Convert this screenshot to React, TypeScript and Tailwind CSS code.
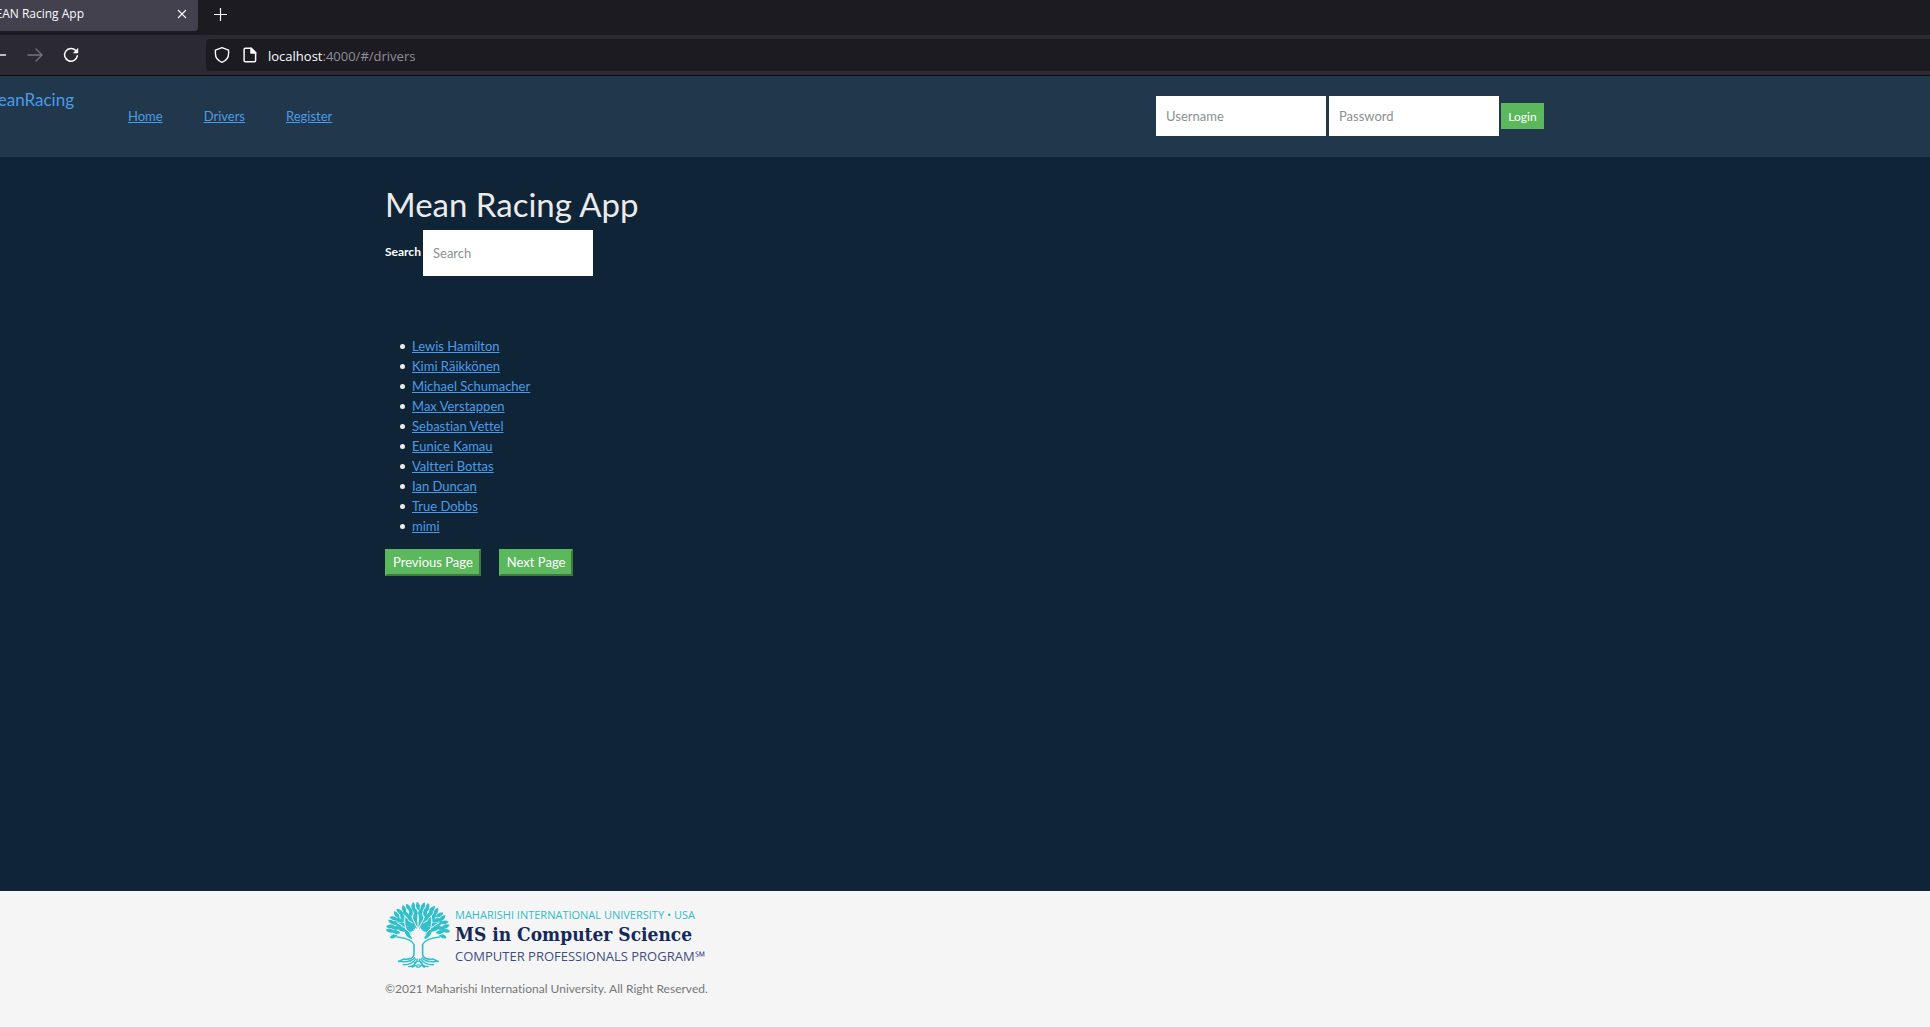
import React from "react";

const drivers = [
  "Lewis Hamilton",
  "Kimi Räikkönen",
  "Michael Schumacher",
  "Max Verstappen",
  "Sebastian Vettel",
  "Eunice Kamau",
  "Valtteri Bottas",
  "Ian Duncan",
  "True Dobbs",
  "mimi",
];

const navLinks = ["Home", "Drivers", "Register"];

type Leaf = { x: number; y: number; r: number; s: number };

function ring(rx: number, ry: number, from: number, to: number, count: number, s: number, sway: number): Leaf[] {
  return Array.from({ length: count }, (_, i) => {
    const a = from + ((to - from) * i) / (count - 1);
    const rad = (a * Math.PI) / 180;
    const tilt = i % 2 === 0 ? sway : -sway;
    return { x: 115 + rx * Math.cos(rad), y: 108 + ry * Math.sin(rad), r: a + 90 + tilt, s };
  });
}

const leaves: Leaf[] = [
  ...ring(84, 74, 180, 360, 19, 1.1, 12),
  ...ring(67, 57, 176, 364, 16, 1.15, 16),
  ...ring(49, 42, 186, 354, 10, 1.3, 14),
  ...ring(30, 24, 190, 350, 6, 1.5, 0),
  { x: 86, y: 118, r: -35, s: 1.5 },
  { x: 145, y: 118, r: 35, s: 1.5 },
  { x: 42, y: 124, r: -115, s: 1.1 },
  { x: 189, y: 124, r: 115, s: 1.1 },
];

function TreeLogo() {
  return (
    <svg viewBox="15 18 200 206" className="h-[68px] w-[66px] shrink-0" aria-hidden="true">
      {leaves.map((l, i) => (
        <path
          key={i}
          d="M0 -13 C7 -6 7 5 0 12 C-7 5 -7 -6 0 -13Z"
          fill="#30c0cb"
          transform={`translate(${l.x} ${l.y}) rotate(${l.r}) scale(${l.s})`}
        />
      ))}
      <g fill="none" stroke="#f5f5f5" strokeWidth="3" strokeLinecap="round">
        <path d="M115 145V58M115 105L96 66M115 105L135 66M103 140C97 112 70 94 52 84M127 140C133 112 161 94 179 84M100 142C85 128 66 122 42 118M130 142C146 128 165 122 189 118M79 105C74 88 73 76 76 62M152 105C157 88 158 76 155 62" />
      </g>
      <path d="M104 150C101 132 98 126 90 120L107 130L110 112L115 104L121 112L124 130L140 120C132 126 129 132 127 150Z" fill="#f5f5f5" stroke="#f5f5f5" strokeWidth="2" />
      <g fill="none" stroke="#30c0cb" strokeWidth="5" strokeLinecap="round">
        <path d="M52 127C77 130 98 137 103 150V181C100 192 88 196 72 194L56 201" />
        <path d="M180 127C155 130 134 137 129 150V181C132 192 144 196 160 194L176 201" />
      </g>
      <g fill="none" stroke="#30c0cb" strokeWidth="4" strokeLinecap="round">
        <path d="M56 201C80 204 96 201 105 190M176 201C152 204 136 201 127 190M70 211C88 212 99 207 108 194M162 211C144 212 133 207 124 194M86 217C102 216 110 207 113 194M146 217C130 216 122 207 119 194M98 219C108 209 124 209 134 219M104 206C111 198 121 198 128 206M108 214C113 221 119 221 124 214" />
      </g>
    </svg>
  );
}

const field =
  "w-[170px] bg-white px-[10px] text-[13px] text-[#555] outline-none placeholder:text-[#8b8f93]";

const pageButton =
  "h-[27px] border-2 border-t-[#5cb85c] border-r-[#3d7b3d] border-b-[#3d7b3d] border-l-[#5cb85c] bg-[#5cb85c] px-[6px] pb-[2px]";

export default function App() {
  return (
    <div className="flex min-h-screen flex-col bg-[#0f2537] font-['Lato',sans-serif] text-[13px] leading-5 text-[#ebebeb] [font-variant-ligatures:none]">
      <header className="font-['Open_Sans',sans-serif]">
        <div className="flex h-[35px] items-start bg-[#1c1b22]">
          <div className="flex h-[31px] w-[198px] items-center rounded-br bg-[#42414d] pr-[10px] text-[#fbfbfe]">
            <div className="flex w-[84px] justify-end pb-[3px] text-xs leading-5 whitespace-nowrap">
              <span>EAN Racing App</span>
            </div>
            <button aria-label="Close tab" className="ml-auto pb-1">
              <svg viewBox="0 0 12 12" className="size-3" fill="none" stroke="currentColor" strokeWidth="1.1">
                <path d="M2 2L10 10M10 2L2 10" />
              </svg>
            </button>
          </div>
          <button aria-label="New tab" className="ml-4 pt-2 text-[#fbfbfe]">
            <svg viewBox="0 0 13 13" className="size-[13px]" fill="none" stroke="currentColor" strokeWidth="1.2">
              <path d="M6.5 0V13M0 6.5H13" />
            </svg>
          </button>
        </div>
        <div className="flex h-[41px] items-center border-b border-[#0a0a12] bg-[#2b2a33] text-[#fbfbfe]">
          <button aria-label="Back" className="w-[6px] overflow-hidden">
            <svg viewBox="0 0 6 16" className="h-4 w-[6px]" fill="none" stroke="currentColor" strokeWidth="1.4">
              <path d="M0 8H6" />
            </svg>
          </button>
          <button aria-label="Forward" className="ml-[21px] text-[#76757d]">
            <svg viewBox="0 0 16 16" className="size-4" fill="none" stroke="currentColor" strokeWidth="1.3" strokeLinecap="round" strokeLinejoin="round">
              <path d="M1 8H15M9 2L15 8L9 14" />
            </svg>
          </button>
          <button aria-label="Reload" className="ml-5">
            <svg viewBox="0 0 16 16" className="size-4" fill="none" stroke="currentColor" strokeWidth="1.5" strokeLinecap="round">
              <path d="M12.8 3.6A6.4 6.4 0 1 0 14.3 8.8" />
              <path d="M15.2 .8V6.2H9.8Z" fill="currentColor" stroke="none" />
            </svg>
          </button>
          <div className="ml-[127px] flex h-8 flex-1 items-center rounded-l bg-[#1c1b22] pl-2">
            <svg viewBox="0 0 16 16" className="size-4" fill="none" stroke="currentColor" strokeWidth="1.4" strokeLinejoin="round" aria-hidden="true">
              <path d="M8 .7L14.6 3.1V6.2C14.6 10.5 12.2 13.8 8 15.3C3.8 13.8 1.4 10.5 1.4 6.2V3.1Z" />
            </svg>
            <svg viewBox="0 0 16 16" className="ml-3 size-4" fill="none" stroke="currentColor" strokeWidth="1.5" strokeLinejoin="round" aria-hidden="true">
              <path d="M3.2 1.3H9.2L13.6 5.7V13.4Q13.6 14.7 12.3 14.7H3.4Q2.1 14.7 2.1 13.4V2.4Q2.1 1.3 3.2 1.3Z" />
              <path d="M9 1.2V5.9H13.7Z" fill="currentColor" />
            </svg>
            <p className="ml-[10px] pt-[2px]">
              localhost<span className="text-[#8f8f98]">:4000/#/drivers</span>
            </p>
          </div>
        </div>
      </header>

      <nav className="flex h-[81px] items-start bg-[#20374c] pr-[20%]">
        <a href="#/" className="flex w-[74px] justify-end pt-[14px] text-[17px] leading-5 text-[#4c9be8]">
          eanRacing
        </a>
        <div className="ml-[54px] flex gap-[41px] pt-[30px]">
          {navLinks.map((name) => (
            <a key={name} href={"#/" + name.toLowerCase()} className="text-[#4c9be8] underline">
              {name}
            </a>
          ))}
        </div>
        <form className="ml-auto flex items-center pt-5">
          <input aria-label="Username" placeholder="Username" className={field + " h-10"} />
          <input aria-label="Password" type="password" placeholder="Password" className={field + " ml-[3px] h-10"} />
          <button type="button" className="ml-[2px] h-[26px] w-[43px] bg-[#5cb85c] pt-px text-xs text-white">
            Login
          </button>
        </form>
      </nav>

      <main className="mx-auto w-full max-w-[1160px] flex-1 pt-[27px]">
        <h1 className="text-[33px] leading-10">Mean Racing App</h1>
        <div className="mt-[6px] flex items-center">
          <label htmlFor="search" className="w-[38px] pb-[2px] text-xs font-bold text-white">
            Search
          </label>
          <input id="search" placeholder="Search" className={field + " h-[46px]"} />
        </div>
        <ul className="mt-[60px] pl-[15px]">
          {drivers.map((name) => (
            <li
              key={name}
              className="flex items-center gap-[7px] before:size-[5px] before:rounded-full before:bg-[#ebebeb]"
            >
              <a href="#/drivers" className="text-[#4c9be8] underline">
                {name}
              </a>
            </li>
          ))}
        </ul>
        <div className="mt-[13px] flex gap-[18px] text-white">
          <button className={pageButton}>Previous Page</button>
          <button className={pageButton}>Next Page</button>
        </div>
      </main>

      <footer className="h-[136px] bg-[#f5f5f5]">
        <div className="mx-auto max-w-[1160px] pt-[10px]">
          <div className="flex whitespace-nowrap">
            <TreeLogo />
            <div className="ml-1 pt-[6px] font-['Open_Sans',sans-serif]">
              <p className="text-[11px] leading-4 font-medium text-[#30bdc8]">
                MAHARISHI INTERNATIONAL UNIVERSITY • USA
              </p>
              <p className="font-['DejaVu_Serif_Condensed','DejaVu_Serif',serif] text-[19px] leading-[22px] font-bold text-[#14295a]">
                MS in Computer Science
              </p>
              <p className="text-[13px] leading-[22px] text-[#3d4f80]">
                COMPUTER PROFESSIONALS PROGRAM℠
              </p>
            </div>
          </div>
          <p className="mt-[10px] text-xs leading-5 text-[#777]">
            ©2021 Maharishi International University. All Right Reserved.
          </p>
        </div>
      </footer>
    </div>
  );
}
